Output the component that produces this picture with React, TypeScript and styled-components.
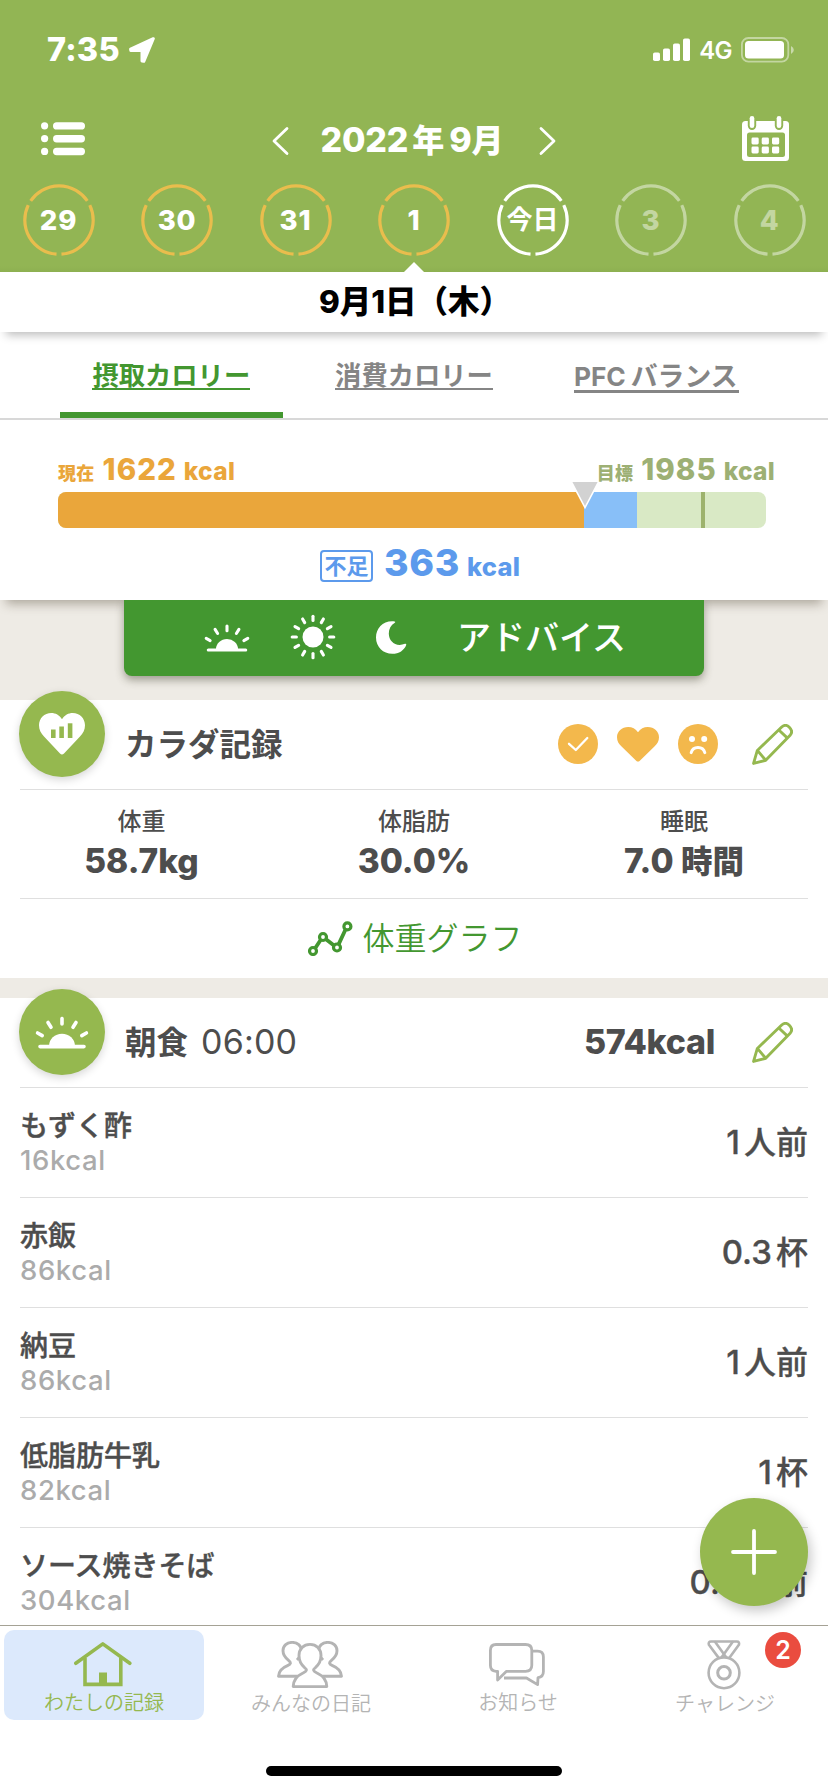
import React from 'react';
import styled, { createGlobalStyle } from 'styled-components';

const sans = `Inter, "Noto Sans CJK JP", sans-serif`;

const color = {
  header: '#92b554',
  leaf: '#95b84f',
  green: '#439730',
  beige: '#eeebe5',
  ink: '#4d4d4d',
  muted: '#ababab',
  tabMuted: '#858585',
  orange: '#eaa63b',
  amber: '#f3b84c',
  blue: '#5c9aec',
  sage: '#9db074',
  rule: '#dfdfdf',
};

const GlobalStyle = createGlobalStyle`
  * { box-sizing: border-box; }
  body { margin: 0; background: #fff; font-family: ${sans}; color: ${color.ink}; }
  svg { display: block; flex: none; }
`;

const Screen = styled.div`
  position: relative;
  width: 828px;
  height: 1792px;
  display: flex;
  flex-direction: column;
  overflow: hidden;
  background: #fff;
`;

/* ---------- header ---------- */

const Header = styled.header`
  height: 272px;
  flex: none;
  background: linear-gradient(${color.header} 0 266px, #8db051 272px);
  color: #fff;
`;

const StatusBar = styled.div`
  height: 100px;
  padding: 0 34px 0 47px;
  display: flex;
  align-items: center;
  justify-content: space-between;
`;

const StatusGroup = styled.div<{ $gap: number }>`
  display: flex;
  align-items: center;
  gap: ${(p) => p.$gap}px;
`;

const Clock = styled.span`
  font-size: 32.5px;
  font-weight: 800;
  line-height: 36px;
  letter-spacing: 0.2px;
  width: 74px;
`;

const Network = styled.span`
  font-size: 24px;
  font-weight: 600;
  line-height: 26px;
  letter-spacing: -0.6px;
  padding-top: 2px;
`;

const MonthNav = styled.nav`
  height: 80px;
  padding: 0 39px 2px 41px;
  display: flex;
  align-items: center;
  justify-content: space-between;
`;

const MonthPicker = styled.div`
  display: flex;
  align-items: center;
  gap: 32px;
  padding: 3px 0 0 0;
`;

const MonthTitle = styled.h1`
  margin: 0;
  width: 186px;
  font-size: 34px;
  font-weight: 800;
  line-height: 40px;
  white-space: nowrap;
  letter-spacing: -0.2px;
`;

const Kanji = styled.span<{ $size: number; $l?: number; $r?: number }>`
  font-size: ${(p) => p.$size}px;
  margin-left: ${(p) => p.$l ?? 0}px;
  margin-right: ${(p) => p.$r ?? 0}px;
  letter-spacing: 0;
`;

const DayStrip = styled.div`
  padding: 4px 22.5px 0;
  display: flex;
  justify-content: space-between;
`;

const Day = styled.div<{ $faded?: boolean }>`
  display: grid;
  place-items: center;
  width: 72px;
  height: 72px;
  opacity: ${(p) => (p.$faded ? 0.45 : 1)};
  > * { grid-area: 1 / 1; }
`;

const DayLabel = styled.span<{ $kanji?: boolean }>`
  font-size: ${(p) => (p.$kanji ? 26 : 27.5)}px;
  font-weight: ${(p) => (p.$kanji ? 700 : 800)};
  line-height: 30px;
  letter-spacing: ${(p) => (p.$kanji ? 0 : 0.8)}px;
`;

/* ---------- date + calorie summary ---------- */

const DateBar = styled.div`
  position: relative;
  z-index: 2;
  height: 60px;
  flex: none;
  background: #fff;
  color: #000;
  font-size: 31.5px;
  font-weight: 800;
  line-height: 60px;
  text-align: center;
  padding-left: 2px;
  box-shadow: 0 9px 9px -6px rgba(0, 0, 0, 0.27);
  &::before {
    content: '';
    position: absolute;
    left: 404px;
    top: -10px;
    border: 10px solid transparent;
    border-top: 0;
    border-bottom-color: #fff;
  }
`;

const Summary = styled.section`
  position: relative;
  z-index: 1;
  height: 268px;
  flex: none;
  background: #fff;
  box-shadow: 0 10px 10px -6px rgba(60, 50, 30, 0.36);
`;

const Tabs = styled.div`
  height: 88px;
  padding: 0 50px;
  display: flex;
  border-bottom: 2px solid #d8d8d8;
`;

const Tab = styled.button<{ $active?: boolean }>`
  flex: 1;
  margin: 0 10px;
  padding: 31px 0 0;
  border: 0;
  border-bottom: 6px solid ${(p) => (p.$active ? color.green : 'transparent')};
  background: none;
  color: ${(p) => (p.$active ? color.green : color.tabMuted)};
  font-family: ${sans};
  font-size: 26.3px;
  font-weight: 700;
  display: flex;
  justify-content: center;
  align-items: flex-start;
  white-space: nowrap;
`;

const TabText = styled.span<{ $thick?: boolean }>`
  line-height: ${(p) => (p.$thick ? 27 : 26)}px;
  height: ${(p) => (p.$thick ? 30 : 27)}px;
  border-bottom: ${(p) => (p.$thick ? 3 : 2)}px solid currentColor;
  padding-right: ${(p) => (p.$thick ? 2 : 0)}px;
`;

const Amounts = styled.div`
  padding: 31px 53px 0 58px;
  height: 72px;
  display: flex;
  justify-content: space-between;
`;

const Amount = styled.div<{ $tone: string }>`
  color: ${(p) => p.$tone};
  font-weight: 800;
  line-height: 36px;
  font-size: 29.5px;
  letter-spacing: 1px;
  white-space: nowrap;
`;

const Small = styled.span<{ $size: number; $r?: number; $l?: number }>`
  font-size: ${(p) => p.$size}px;
  margin-right: ${(p) => p.$r ?? 0}px;
  margin-left: ${(p) => p.$l ?? 0}px;
  letter-spacing: 0.3px;
`;

const Gauge = styled.div`
  position: relative;
  width: 708px;
  height: 36px;
  margin-left: 58px;
  border-radius: 8px;
  background: #d9e9c5;
  display: flex;
`;

const Consumed = styled.div`
  width: 526px;
  background: ${color.orange};
  border-radius: 8px 0 0 8px;
`;

const Shortage = styled.div`
  width: 52.5px;
  background: #88bff8;
`;

const TargetMark = styled.div`
  width: 4px;
  margin-left: 64.5px;
  background: #9db26d;
`;

const Pointer = styled.svg`
  position: absolute;
  left: 511.5px;
  top: -10px;
`;

const Balance = styled.div`
  display: flex;
  align-items: center;
  padding: 13px 0 0 320px;
  color: ${color.blue};
  font-weight: 800;
`;

const BalanceTag = styled.span`
  width: 53px;
  height: 32px;
  margin-top: 1px;
  border: 2px solid ${color.blue};
  border-radius: 4px;
  font-size: 22px;
  font-weight: 700;
  line-height: 28px;
  display: flex;
  justify-content: center;
`;

const BalanceValue = styled.span`
  margin-left: 11px;
  font-size: 37.5px;
  line-height: 44px;
  letter-spacing: 0.6px;
  white-space: nowrap;
`;

/* ---------- scroll body ---------- */

const Body = styled.main`
  flex: 1;
  min-height: 0;
  overflow: hidden;
  background: ${color.beige};
`;

const AdviceArea = styled.div`
  height: 100px;
`;

const Advice = styled.button`
  position: relative;
  z-index: 2;
  width: 580px;
  height: 76px;
  margin-left: 124px;
  padding: 0 0 0 80px;
  border: 0;
  border-radius: 0 0 8px 8px;
  background: ${color.green};
  box-shadow: 0 4px 9px rgba(60, 60, 40, 0.45);
  color: #fff;
  font-family: ${sans};
  font-size: 34px;
  font-weight: 500;
  line-height: 76px;
  display: flex;
  align-items: center;
`;

const AdviceIcon = styled.span<{ $l?: number; $t?: number }>`
  margin-left: ${(p) => p.$l ?? 0}px;
  margin-top: ${(p) => p.$t ?? 0}px;
`;

const AdviceText = styled.span`
  margin-left: 50px;
`;

const Card = styled.section`
  background: #fff;
  padding: 0 20px;
  margin-bottom: 20px;
`;

const CardHead = styled.div`
  height: 90px;
  border-bottom: 1px solid ${color.rule};
  display: flex;
  align-items: center;
  padding-right: 15px;
`;

const Medallion = styled.div`
  width: 86px;
  height: 86px;
  margin: -9px 20px 0 -1px;
  border-radius: 50%;
  background: ${color.leaf};
  box-shadow: 0 3px 8px rgba(0, 0, 0, 0.16);
  display: grid;
  place-items: center;
  flex: none;
  align-self: flex-start;
`;

const CardTitle = styled.h2`
  margin: 0;
  flex: 1;
  font-size: 31.5px;
  font-weight: 700;
  line-height: 40px;
`;

const Time = styled.span`
  margin-left: 13px;
  font-size: 34px;
  font-weight: 400;
  letter-spacing: 0.2px;
`;

const Energy = styled.span`
  font-size: 34px;
  font-weight: 800;
  letter-spacing: -0.3px;
  line-height: 38px;
  padding-bottom: 2px;
  margin-right: 37px;
`;

const Marks = styled.div`
  display: flex;
  align-items: center;
  gap: 19px;
  margin-right: 34px;
  padding-bottom: 1px;
`;

const Stats = styled.div`
  height: 109px;
  border-bottom: 1px solid ${color.rule};
  display: grid;
  grid-template-columns: 243px 302px 238px;
`;

const Stat = styled.div`
  padding-top: 17px;
  text-align: center;
`;

const StatLabel = styled.div`
  font-size: 24px;
  font-weight: 500;
  line-height: 30px;
`;

const StatValue = styled.div`
  font-size: 33.5px;
  font-weight: 800;
  line-height: 40px;
  padding-top: 4px;
`;

const GraphLink = styled.a`
  height: 79px;
  display: flex;
  align-items: center;
  justify-content: center;
  gap: 9px;
  color: ${color.green};
  font-size: 32px;
  font-weight: 350;
  line-height: 40px;
  padding-left: 3px;
`;

const FoodRow = styled.div`
  height: 110px;
  border-bottom: 1px solid ${color.rule};
  display: flex;
  align-items: center;
  justify-content: space-between;
`;

const FoodName = styled.div`
  font-size: 28px;
  font-weight: 500;
  line-height: 38px;
  -webkit-text-stroke: 0.4px currentColor;
`;

const FoodEnergy = styled.div`
  font-size: 27.5px;
  font-weight: 500;
  line-height: 30px;
  letter-spacing: 0.6px;
  padding-bottom: 4px;
  color: ${color.muted};
`;

const Quantity = styled.div`
  font-size: 33px;
  font-weight: 500;
  line-height: 40px;
  white-space: nowrap;
  -webkit-text-stroke: 0.3px currentColor;
`;

/* ---------- bottom ---------- */

const AddButton = styled.button`
  position: absolute;
  z-index: 3;
  left: 700px;
  top: 1498px;
  width: 108px;
  height: 108px;
  padding: 0;
  border: 0;
  border-radius: 50%;
  background: ${color.leaf};
  box-shadow: 3px 5px 12px rgba(0, 0, 0, 0.22);
  display: grid;
  place-items: center;
`;

const TabBar = styled.nav`
  position: relative;
  z-index: 4;
  height: 167px;
  flex: none;
  border-top: 1px solid #a5a295;
  background: #fff;
  padding: 4px 0 0;
  display: flex;
  flex-direction: column;
  align-items: center;
`;

const TabItems = styled.div`
  width: 100%;
  display: grid;
  grid-template-columns: repeat(4, 207px);
`;

const TabItem = styled.a<{ $active?: boolean }>`
  position: relative;
  width: 200px;
  height: 90px;
  margin-left: 4px;
  border-radius: 10px;
  background: ${(p) => (p.$active ? '#dce9fc' : 'transparent')};
  color: ${(p) => (p.$active ? color.leaf : '#b4b4b4')};
  display: flex;
  flex-direction: column;
  align-items: center;
`;

const TabIcon = styled.div<{ $shift?: number }>`
  height: 60px;
  padding: 11px 0 2px;
  margin-left: ${(p) => p.$shift ?? -2}px;
  display: flex;
  align-items: center;
`;

const TabLabel = styled.span<{ $dy?: number }>`
  font-size: 20px;
  font-weight: 350;
  line-height: 26px;
  padding-top: ${(p) => p.$dy ?? 0}px;
  white-space: nowrap;
`;

const Badge = styled.span`
  position: absolute;
  left: 140px;
  top: 2px;
  width: 36px;
  height: 36px;
  border-radius: 50%;
  background: #ea4c3f;
  color: #fff;
  font-size: 25px;
  font-weight: 600;
  line-height: 36px;
  text-align: center;
`;

const HomeIndicator = styled.div`
  width: 296px;
  height: 10px;
  margin-top: 46px;
  border-radius: 5px;
  background: #000;
`;

/* ---------- icons ---------- */

const LocationArrow = () => (
  <svg width="26" height="26" viewBox="0 0 26 26" fill="#fff" stroke="#fff" strokeWidth="3" strokeLinejoin="round">
    <path d="M24.3 1.7 L1.6 12.2 L1.8 13.4 L13 13.5 L13 24 L14.8 24.3 Z" />
  </svg>
);

const Signal = () => (
  <svg width="37" height="24" viewBox="0 0 37 24" fill="#fff">
    <rect x="0" y="14.5" width="7" height="8.5" rx="1.8" />
    <rect x="10" y="10.5" width="7" height="12.5" rx="1.8" />
    <rect x="20" y="5.5" width="7" height="17.5" rx="1.8" />
    <rect x="30" y="0.5" width="7" height="22.5" rx="1.8" />
  </svg>
);

const Battery = () => (
  <svg width="53" height="26" viewBox="0 0 53 26">
    <rect x="0.9" y="1" width="46.4" height="23.6" rx="6.5" fill="none" stroke="#fff" strokeOpacity="0.45" strokeWidth="1.8" />
    <rect x="4" y="4" width="39" height="17.5" rx="3.5" fill="#fff" />
    <path d="M50 9 Q52.8 10.5 52.8 13 Q52.8 15.5 50 17 Z" fill="#fff" fillOpacity="0.5" />
  </svg>
);

const ListIcon = () => (
  <svg width="44" height="34" viewBox="0 0 44 34" fill="#fff">
    {[0.2, 13, 25.8].map((y) => (
      <g key={y}>
        <circle cx="3.6" cy={y + 3.6} r="3.6" />
        <rect x="12" y={y} width="32" height="7.4" rx="3.7" />
      </g>
    ))}
  </svg>
);

const Chevron = ({ right }: { right?: boolean }) => (
  <svg width="17" height="30" viewBox="0 0 17 30" fill="none" stroke="#fff" strokeWidth="2.8" strokeLinecap="round" strokeLinejoin="round">
    <path d={right ? 'M2 2.5 L15 15 L2 27.5' : 'M15 2.5 L2 15 L15 27.5'} />
  </svg>
);

const CalendarIcon = () => (
  <svg width="47" height="46" viewBox="0 0 47 46">
    <rect x="0" y="5" width="47" height="40" rx="3.5" fill="#fff" />
    <rect x="5" y="16.5" width="38" height="24.5" rx="2.5" fill={color.header} />
    {[10, 37].map((x) => (
      <g key={x}>
        <rect x={x - 4.2} y="-4" width="8.4" height="18" rx="4.2" fill={color.header} />
        <rect x={x - 2.3} y="0" width="4.6" height="12" rx="2.3" fill="#fff" />
      </g>
    ))}
    {[9.5, 19.7, 30].map((x) =>
      [21.5, 30.5].map((y) => <rect key={`${x}-${y}`} x={x} y={y} width="7.2" height="7" rx="1.4" fill="#fff" />),
    )}
  </svg>
);

const Ring = ({ stroke }: { stroke: string }) => (
  <svg width="72" height="72" viewBox="0 0 72 72" fill="none" stroke={stroke} strokeWidth="3.2">
    {[-90, 30, 150].map((a) => (
      <path key={a} d="M7.7 16.8 A34.2 34.2 0 0 1 64.3 16.8" transform={`rotate(${a + 90} 36 36)`} />
    ))}
  </svg>
);

const Sunrise = ({ width }: { width: number }) => (
  <svg width={width} height={(width * 34) / 54} viewBox="0 0 54 34" fill="none" stroke="#fff" strokeWidth="3.6" strokeLinecap="round">
    <path d="M27 3.5 V9 M13 7.5 L16 12.3 M41 7.5 L38 12.3 M2.6 18 L7.2 20.6 M51.4 18 L46.8 20.6 M5 31.6 H49" />
    <path d="M14 31 A13 12.3 0 0 1 40 31 Z" fill="#fff" stroke="none" />
  </svg>
);

const Sun = () => (
  <svg width="46" height="46" viewBox="0 0 46 46" stroke="#fff" strokeWidth="3.1" strokeLinecap="round">
    <circle cx="23" cy="23" r="10.5" fill="#fff" stroke="none" />
    {Array.from({ length: 12 }, (_, i) => (
      <path key={i} d="M23 2.2 V6.4" transform={`rotate(${i * 30} 23 23)`} />
    ))}
  </svg>
);

const Moon = () => (
  <svg width="31" height="33" viewBox="0 0 31 33" fill="#fff">
    <path d="M18.5 0.5 C7.5 -0.8 0 7 0 16.5 C0 26 7.2 32.8 16.3 32.8 C23 32.8 28.3 29.3 30.2 24 C30.5 23 29.8 22.4 29 22.8 C20 26.5 12.8 20.5 12.8 12.5 C12.8 8 14.8 4.3 18.8 1.8 C19.6 1.2 19.4 0.6 18.5 0.5 Z" />
  </svg>
);

const heartPath = 'M23 6.2 C20.5 2 16.5 0 12.3 0 C5.3 0 0 5.4 0 12.2 C0 17 2 20.3 5 23.4 L21 40.4 C22.3 41.8 23.7 41.8 25 40.4 L41 23.4 C44 20.3 46 17 46 12.2 C46 5.4 40.7 0 33.7 0 C29.5 0 25.5 2 23 6.2 Z';

const HeartChart = () => (
  <svg width="46" height="42" viewBox="0 0 46 42">
    <path d={heartPath} fill="#fff" />
    <g fill={color.leaf}>
      <rect x="12" y="16.5" width="4.6" height="8.5" />
      <rect x="20.3" y="13.5" width="4.6" height="11.5" />
      <rect x="28.8" y="10.3" width="4.6" height="14.7" />
    </g>
  </svg>
);

const CheckMark = () => (
  <svg width="40" height="40" viewBox="0 0 40 40">
    <circle cx="20" cy="20" r="20" fill={color.amber} />
    <path d="M11 19.8 L17.8 26 L29.3 14" fill="none" stroke="#fff" strokeWidth="2.3" strokeLinecap="round" strokeLinejoin="round" />
  </svg>
);

const Heart = () => (
  <svg width="42" height="35" viewBox="0 0 46 42" preserveAspectRatio="none">
    <path d={heartPath} fill={color.amber} />
  </svg>
);

const SadFace = () => (
  <svg width="40" height="40" viewBox="0 0 40 40">
    <circle cx="20" cy="20" r="20" fill={color.amber} />
    <circle cx="14" cy="15" r="3" fill="#fff" />
    <circle cx="26.2" cy="15" r="3" fill="#fff" />
    <path d="M13.2 28.6 C15 21.8 25 21.8 26.8 28.6" fill="none" stroke="#fff" strokeWidth="3" strokeLinecap="round" />
  </svg>
);

const Pencil = () => (
  <svg width="41" height="42" viewBox="0 0 40 41" fill="none" stroke={color.leaf} strokeWidth="2.8" strokeLinejoin="round">
    <path d="M1.5 38.5 L5.2 25.8 L29 3 C31.5 0.7 34 0.8 36.4 3.2 C39 5.8 39.4 8.6 37.2 11 L13.4 35.4 Z" />
    <path d="M5.2 25.8 L13.4 35.4 M26.2 5.8 L34.6 13.8" />
  </svg>
);

const GraphIcon = () => (
  <svg width="45" height="35" viewBox="0 0 45 35" fill="none" stroke={color.green} strokeWidth="3.8">
    <path d="M7.5 26.8 L12.6 19 M18 18.3 L26 24.5 M30.6 23.4 L37.4 8.8" />
    {[[5, 30], [15, 16], [29, 26.5], [39.4, 5.4]].map(([x, y]) => (
      <circle key={x} cx={x} cy={y} r="3.5" strokeWidth="3.2" />
    ))}
  </svg>
);

const House = () => (
  <svg width="58" height="45" viewBox="0 0 58 45" fill="none" stroke="currentColor" strokeWidth="3.6" strokeLinecap="round" strokeLinejoin="round">
    <path d="M1.8 21.3 L28.8 1.9 L55.8 21.3" />
    <path d="M11 16 V42.4 H46.8 V16" strokeLinecap="butt" strokeLinejoin="miter" />
    <rect x="25" y="30.5" width="8" height="12" fill="currentColor" stroke="none" />
  </svg>
);

const backPerson = 'M22 35.3 H1.5 C1.8 29.8 5.5 26.6 10.5 24.6 C14 23.2 14.2 21.6 11.8 19.6 C8.2 16.8 6 13.5 6 9.8 C6 4.6 10 1.4 15.2 1.4 C20.4 1.4 24.4 4.6 24.4 9.8 C24.4 13 22 17 20 19';

const People = () => (
  <svg width="66" height="48" viewBox="0 0 66 48" fill="#fff" stroke="currentColor" strokeWidth="2.9" strokeLinejoin="round">
    <path d={backPerson} />
    <path d={backPerson} transform="translate(66 0) scale(-1 1)" />
    <path d="M16.2 45.6 C16.4 38.4 20.4 34.6 26 32 C30 30 30.4 28.8 27.6 26.6 C24 23.6 22 19.4 22 14.6 C22 7.8 26.6 3.4 33 3.4 C39.4 3.4 44 7.8 44 14.6 C44 19.4 42 23.6 38.4 26.6 C35.6 28.8 36 30 40 32 C45.6 34.6 49.6 38.4 49.8 45.6 Z" />
  </svg>
);

const Chat = () => (
  <svg width="56" height="44" viewBox="0 0 56 44" fill="none" stroke="currentColor" strokeWidth="2.8" strokeLinejoin="round">
    <path d="M44 8.2 H48.5 Q54.4 8.2 54.4 14 V28.5 Q54.4 34 49 34.6 L48.6 41.6 L37.5 35 H15" />
    <path d="M7 1.5 H36.5 Q42.8 1.5 42.8 7.5 V22.3 Q42.8 28.3 36.5 28.3 H17.5 L8.6 37 V28.3 H7 Q1.4 28 1.4 22.3 V7.5 Q1.4 1.5 7 1.5 Z" fill="#fff" />
  </svg>
);

const Medal = () => (
  <svg width="35" height="50" viewBox="0 0 35 50" fill="none" stroke="currentColor" strokeWidth="2.6" strokeLinejoin="round" strokeLinecap="round">
    <path d="M11.5 17.6 L1.9 4.8 Q1 1.5 4 1.5 H29.8 Q32.8 1.5 31.9 4.8 L22.6 17.6" />
    <path d="M8.2 2 L18.8 16.8 M25.6 2 L15 16.8" />
    <circle cx="17" cy="32.8" r="15.4" fill="#fff" />
    <circle cx="17" cy="32.8" r="6.3" strokeWidth="3" />
  </svg>
);

/* ---------- content ---------- */

const days = [
  { label: '29', ring: '#e9bd4d' },
  { label: '30', ring: '#e9bd4d' },
  { label: '31', ring: '#e9bd4d' },
  { label: '1', ring: '#e9bd4d' },
  { label: '今日', ring: '#fff', kanji: true },
  { label: '3', ring: '#fff', faded: true },
  { label: '4', ring: '#fff', faded: true },
];

const foods = [
  { name: 'もずく酢', kcal: 16, amount: '1', unit: '人前' },
  { name: '赤飯', kcal: 86, amount: '0.3', unit: '杯' },
  { name: '納豆', kcal: 86, amount: '1', unit: '人前' },
  { name: '低脂肪牛乳', kcal: 82, amount: '1', unit: '杯' },
  { name: 'ソース焼きそば', kcal: 304, amount: '0.5', unit: '人前' },
];

export default function App() {
  return (
    <Screen>
      <GlobalStyle />
      <Header>
        <StatusBar>
          <StatusGroup $gap={8}>
            <Clock>7:35</Clock>
            <LocationArrow />
          </StatusGroup>
          <StatusGroup $gap={9}>
            <Signal />
            <Network>4G</Network>
            <Battery />
          </StatusGroup>
        </StatusBar>
        <MonthNav>
          <ListIcon />
          <MonthPicker>
            <Chevron />
            <MonthTitle>
              2022<Kanji $size={32} $l={4} $r={5}>年</Kanji>9<Kanji $size={32}>月</Kanji>
            </MonthTitle>
            <Chevron right />
          </MonthPicker>
          <CalendarIcon />
        </MonthNav>
        <DayStrip>
          {days.map((d) => (
            <Day key={d.label} $faded={d.faded}>
              <Ring stroke={d.ring} />
              <DayLabel $kanji={d.kanji}>{d.label}</DayLabel>
            </Day>
          ))}
        </DayStrip>
      </Header>

      <DateBar>9月1日（木）</DateBar>

      <Summary>
        <Tabs>
          <Tab $active><TabText>摂取カロリー</TabText></Tab>
          <Tab><TabText>消費カロリー</TabText></Tab>
          <Tab><TabText $thick>PFC<Kanji $size={26.8} $l={5}>バランス</Kanji></TabText></Tab>
        </Tabs>
        <Amounts>
          <Amount $tone={color.orange}>
            <Small $size={18} $r={8}>現在</Small>1622<Small $size={24.5} $l={7}>kcal</Small>
          </Amount>
          <Amount $tone={color.sage}>
            <Small $size={18} $r={8}>目標</Small>1985<Small $size={24.5} $l={7}>kcal</Small>
          </Amount>
        </Amounts>
        <Gauge>
          <Consumed />
          <Shortage />
          <TargetMark />
          <Pointer width="30" height="28" viewBox="0 0 30 28">
            <path d="M1 -1 L15 25.5 L29 -1 Z" fill="#d2d2d2" stroke="#fff" strokeWidth="1.6" />
          </Pointer>
        </Gauge>
        <Balance>
          <BalanceTag>不足</BalanceTag>
          <BalanceValue>363<Small $size={25.5} $l={7}>kcal</Small></BalanceValue>
        </Balance>
      </Summary>

      <Body>
        <AdviceArea>
          <Advice>
            <AdviceIcon $t={-1}><Sunrise width={46} /></AdviceIcon>
            <AdviceIcon $l={40} $t={-3}><Sun /></AdviceIcon>
            <AdviceIcon $l={40} $t={-2}><Moon /></AdviceIcon>
            <AdviceText>アドバイス</AdviceText>
          </Advice>
        </AdviceArea>

        <Card>
          <CardHead>
            <Medallion><HeartChart /></Medallion>
            <CardTitle>カラダ記録</CardTitle>
            <Marks>
              <CheckMark />
              <Heart />
              <SadFace />
            </Marks>
            <Pencil />
          </CardHead>
          <Stats>
            <Stat>
              <StatLabel>体重</StatLabel>
              <StatValue>58.7kg</StatValue>
            </Stat>
            <Stat>
              <StatLabel>体脂肪</StatLabel>
              <StatValue>30.0%</StatValue>
            </Stat>
            <Stat>
              <StatLabel>睡眠</StatLabel>
              <StatValue>7.0 <Kanji $size={31.5}>時間</Kanji></StatValue>
            </Stat>
          </Stats>
          <GraphLink>
            <GraphIcon />
            体重グラフ
          </GraphLink>
        </Card>

        <Card>
          <CardHead>
            <Medallion><Sunrise width={54} /></Medallion>
            <CardTitle>朝食<Time>06:00</Time></CardTitle>
            <Energy>574kcal</Energy>
            <Pencil />
          </CardHead>
          {foods.map((f) => (
            <FoodRow key={f.name}>
              <div>
                <FoodName>{f.name}</FoodName>
                <FoodEnergy>{f.kcal}kcal</FoodEnergy>
              </div>
              <Quantity>
                {f.amount}<Kanji $size={32} $l={4}>{f.unit}</Kanji>
              </Quantity>
            </FoodRow>
          ))}
        </Card>
      </Body>

      <AddButton aria-label="追加">
        <svg width="48" height="48" viewBox="0 0 48 48" stroke="#fff" strokeWidth="3.8" strokeLinecap="round">
          <path d="M24 3 V45 M3 24 H45" />
        </svg>
      </AddButton>

      <TabBar>
        <TabItems>
          <TabItem $active>
            <TabIcon><House /></TabIcon>
            <TabLabel>わたしの記録</TabLabel>
          </TabItem>
          <TabItem>
            <TabIcon $shift={-3}><People /></TabIcon>
            <TabLabel $dy={1}>みんなの日記</TabLabel>
          </TabItem>
          <TabItem>
            <TabIcon><Chat /></TabIcon>
            <TabLabel>お知らせ</TabLabel>
          </TabItem>
          <TabItem>
            <TabIcon><Medal /></TabIcon>
            <TabLabel $dy={1}>チャレンジ</TabLabel>
            <Badge>2</Badge>
          </TabItem>
        </TabItems>
        <HomeIndicator />
      </TabBar>
    </Screen>
  );
}
